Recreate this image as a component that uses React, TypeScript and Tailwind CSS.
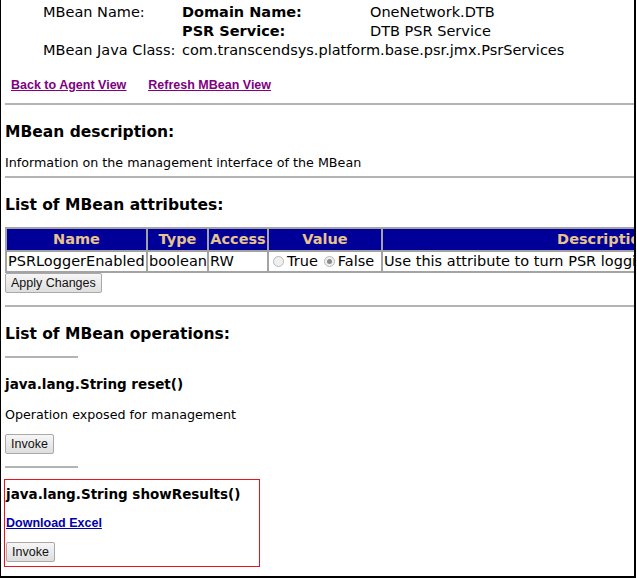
import React from 'react';

const verdana = { fontFamily: '"DejaVu Sans", Verdana, sans-serif' };

function Hr({ short }: { short?: boolean }) {
  return <div className={`h-[2px] bg-[#b4b4b4] ${short ? 'w-[73px]' : 'w-[640px]'}`} />;
}

function Button({ children }: { children: React.ReactNode }) {
  return (
    <button className="h-[20px] px-[5px] text-[12.5px] leading-none text-[#111] font-['Liberation_Sans',Arial,sans-serif] bg-gradient-to-b from-[#f6f6f6] to-[#dedede] border border-[#a9a9a9] rounded-[2px]">
      {children}
    </button>
  );
}

function Radio({ checked }: { checked?: boolean }) {
  return (
    <span className="flex items-center justify-center w-[11px] h-[11px] rounded-full border border-[#b8b8b8] bg-[#f0f0f0]">
      {checked && <span className="w-[5px] h-[5px] rounded-full bg-[#8a8a8a]" />}
    </span>
  );
}

const cell = 'border-2 border-[#a3a3a3]';

export default function App() {
  return (
    <div className="w-[637px] h-[579px] bg-white overflow-hidden">
      <div
        className="w-[636px] h-[578px] border-l border-r-2 border-b-2 border-black overflow-hidden pl-[4px] text-black"
        style={verdana}
      >
        {/* MBean header */}
        <table className="ml-[38px] mt-[3px] text-[14.5px] leading-[19px]">
          <tbody>
            <tr>
              <td className="w-[139px]">MBean Name:</td>
              <td className="w-[188px] font-bold">Domain Name:</td>
              <td>OneNetwork.DTB</td>
            </tr>
            <tr>
              <td></td>
              <td className="font-bold">PSR Service:</td>
              <td>DTB PSR Service</td>
            </tr>
            <tr>
              <td>MBean Java Class:</td>
              <td colSpan={2}>com.transcendsys.platform.base.psr.jmx.PsrServices</td>
            </tr>
          </tbody>
        </table>

        {/* Nav links */}
        <div className="flex gap-[22px] pl-[6px] mt-[17px] text-[12.5px] leading-[16px] font-bold text-[#800080] underline font-['Liberation_Sans',Arial,sans-serif]">
          <a href="#">Back to Agent View</a>
          <a href="#">Refresh MBean View</a>
        </div>

        <div className="mt-[10px]">
          <Hr />
        </div>

        <h2 className="text-[15.5px] font-bold mt-[17px] leading-[20px]">MBean description:</h2>
        <p className="text-[12.7px] mt-[13px] leading-[16px]">Information on the management interface of the MBean</p>
        <div className="mt-[5px]">
          <Hr />
        </div>

        <h2 className="text-[15.5px] font-bold mt-[17px] leading-[20px]">List of MBean attributes:</h2>

        {/* Attributes table */}
        <table className="mt-[12px] border-collapse text-[14.5px] leading-[17px] w-[822px] table-fixed">
          <thead>
            <tr className="bg-[#000099] text-[#e7c48e] font-bold">
              <th className={`${cell} w-[141px] py-[2px]`}>Name</th>
              <th className={`${cell} w-[61px]`}>Type</th>
              <th className={`${cell} w-[60px]`}>Access</th>
              <th className={`${cell} w-[114px]`}>Value</th>
              <th className={cell}>Description</th>
            </tr>
          </thead>
          <tbody>
            <tr>
              <td className={`${cell} px-[1px] py-[1px]`}>PSRLoggerEnabled</td>
              <td className={`${cell} px-[1px]`}>boolean</td>
              <td className={`${cell} px-[1px]`}>RW</td>
              <td className={`${cell} px-[4px]`}>
                <div className="flex items-center whitespace-nowrap">
                  <Radio />
                  <span className="ml-[3px]">True</span>
                  <span className="ml-[6px]">
                    <Radio checked />
                  </span>
                  <span className="ml-[3px]">False</span>
                </div>
              </td>
              <td className={`${cell} px-[1px] whitespace-nowrap overflow-hidden`}>
                Use this attribute to turn PSR logging on or off
              </td>
            </tr>
          </tbody>
        </table>
        <div className="flex">
          <Button>Apply Changes</Button>
        </div>

        <div className="mt-[12px]">
          <Hr />
        </div>

        <h2 className="text-[15.5px] font-bold mt-[17px] leading-[20px]">List of MBean operations:</h2>
        <div className="mt-[12px]">
          <Hr short />
        </div>

        <h3 className="text-[13.5px] font-bold mt-[17px] leading-[18px]">java.lang.String reset()</h3>
        <p className="text-[12.7px] mt-[14px] leading-[16px]">Operation exposed for management</p>
        <div className="flex mt-[11px]">
          <Button>Invoke</Button>
        </div>
        <div className="mt-[12px]">
          <Hr short />
        </div>

        {/* Highlighted operation */}
        <div className="mt-[11px] -ml-[1px] w-[256px] h-[88px] border border-[#e8131f] pl-[1px]">
          <h3 className="text-[13.5px] font-bold mt-[5px] leading-[18px]">java.lang.String showResults()</h3>
          <a
            href="#"
            className="block mt-[12px] text-[12.5px] font-bold text-[#0000aa] underline leading-[16px] font-['Liberation_Sans',Arial,sans-serif]"
          >
            Download Excel
          </a>
          <div className="flex mt-[11px]">
            <Button>Invoke</Button>
          </div>
        </div>
      </div>
    </div>
  );
}
